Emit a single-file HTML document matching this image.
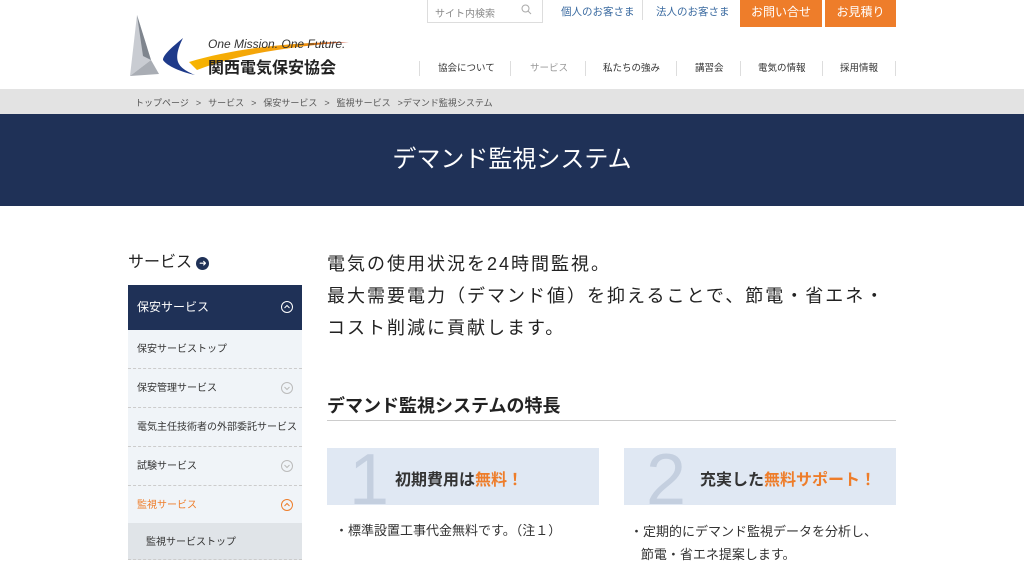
<!DOCTYPE html>
<html lang="ja"><head><meta charset="utf-8">
<style>
*{margin:0;padding:0;box-sizing:border-box}
body{width:1024px;height:560px;overflow:hidden;background:#fff;font-family:"Liberation Sans","Noto Sans CJK JP",sans-serif;color:#333;position:relative}
.a{position:absolute}
.search{left:427px;top:0;width:116px;height:23px;border:1px solid #ddd;border-top:none;font-size:10px;color:#888;padding:5px 0 0 7px}
.tl{font-size:10.5px;color:#3a6aa0;top:4px}
.btn{top:0;height:27px;background:#ee7d2a;color:#fff;font-size:12px;text-align:center;line-height:24px}
.nav{top:62px;font-size:9.5px;color:#333;height:14px;line-height:14px}
.sep{top:61px;width:1px;height:15px;background:#ddd}
.bc{left:0;top:89px;width:1024px;height:25px;background:#e3e3e3;font-size:9px;color:#555;padding:7px 0 0 135px;word-spacing:1px}
.hero{left:0;top:114px;width:1024px;height:92px;background:#1f3157;color:#fff;font-size:24px;text-align:center;line-height:92px}
.side{left:128px;width:174px;font-size:10px;color:#333;padding-left:9px;border-bottom:1px dashed #ccc;background:#f0f4f8;height:39px;line-height:39px}
.ci{position:absolute;right:9px;top:13px;width:12px;height:12px}
.lead{left:327px;top:248px;font-size:18px;line-height:32px;color:#222;letter-spacing:2px}
.card{top:448px;width:272px;height:57px;background:#e0e8f3;overflow:hidden}
.num{position:absolute;left:22px;top:-4px;font-size:72px;color:#c4cfdf;line-height:72px;font-family:"Liberation Sans",sans-serif}
.ct{position:absolute;top:18px;font-size:16px;font-weight:bold;color:#333}
.or{color:#ee7d2a}
</style></head><body>
<svg class="a" style="left:125px;top:10px" width="230" height="75" viewBox="0 0 230 75">
<defs><linearGradient id="g" x1="0" x2="1"><stop offset="0" stop-color="#f7b500"/><stop offset="0.7" stop-color="#f29a10"/><stop offset="1" stop-color="#c0301a"/></linearGradient></defs>
<path d="M12 5 L26 50 L5 66 Z" fill="#c9ccd2"/><path d="M12 5 L26 50 L18 46 Z" fill="#7f858e"/><path d="M26 50 L5 66 L34 64Z" fill="#a9adb4"/>
<path d="M58 28 C46 38 38 45 38 50 C42 56 56 62 70 65 C54 58 46 52 58 28Z" fill="#1e3a8a"/>
<path d="M64 52 C110 38 170 32 224 32 C170 36 112 44 72 60 Z" fill="url(#g)"/>
<text x="83" y="38" font-size="12" font-style="italic" fill="#333" font-family="Liberation Sans">One Mission. One Future.</text>
<text x="83" y="63" font-size="16" font-weight="bold" fill="#222" font-family="Liberation Sans,Noto Sans CJK JP">関西電気保安協会</text>
</svg>
<div class="a search">サイト内検索<svg style="position:absolute;right:10px;top:4px" width="11" height="11" viewBox="0 0 11 11"><circle cx="4.5" cy="4.5" r="3.5" fill="none" stroke="#aaa"/><path d="M7 7 L10 10" stroke="#aaa"/></svg></div>
<div class="a tl" style="left:561px">個人のお客さま</div>
<div class="a" style="left:642px;top:0;width:1px;height:20px;background:#ddd"></div>
<div class="a tl" style="left:656px">法人のお客さま</div>
<div class="a btn" style="left:740px;width:82px">お問い合せ</div>
<div class="a btn" style="left:825px;width:71px">お見積り</div>
<div class="a sep" style="left:419px"></div>
<div class="a nav" style="left:438px">協会について</div>
<div class="a sep" style="left:510px"></div>
<div class="a nav" style="left:530px;color:#999">サービス</div>
<div class="a sep" style="left:585px"></div>
<div class="a nav" style="left:603px">私たちの強み</div>
<div class="a sep" style="left:676px"></div>
<div class="a nav" style="left:695px">講習会</div>
<div class="a sep" style="left:740px"></div>
<div class="a nav" style="left:758px">電気の情報</div>
<div class="a sep" style="left:822px"></div>
<div class="a nav" style="left:840px">採用情報</div>
<div class="a sep" style="left:895px"></div>
<div class="a bc">トップページ &nbsp;&gt;&nbsp; サービス &nbsp;&gt;&nbsp; 保安サービス &nbsp;&gt;&nbsp; 監視サービス &nbsp;&gt;デマンド監視システム</div>
<div class="a hero">デマンド監視システム</div>
<div class="a" style="left:128px;top:248px;font-size:16px;color:#222">サービス <span style="display:inline-block;width:13px;height:13px;border-radius:50%;background:#1f3157;color:#fff;font-size:9px;text-align:center;line-height:13px;vertical-align:1px">➜</span></div>
<div class="a side" style="top:285px;height:45px;line-height:45px;background:#1f3157;color:#fff;font-size:12px;border:none">保安サービス<svg class="ci" style="top:16px" viewBox="0 0 12 12"><circle cx="6" cy="6" r="5.5" fill="none" stroke="#fff"/><path d="M3.5 7 L6 4.5 L8.5 7" fill="none" stroke="#fff"/></svg></div>
<div class="a side" style="top:330px">保安サービストップ</div>
<div class="a side" style="top:369px">保安管理サービス<svg class="ci" viewBox="0 0 12 12"><circle cx="6" cy="6" r="5.5" fill="none" stroke="#bbb"/><path d="M3.5 5 L6 7.5 L8.5 5" fill="none" stroke="#bbb"/></svg></div>
<div class="a side" style="top:408px">電気主任技術者の外部委託サービス</div>
<div class="a side" style="top:447px">試験サービス<svg class="ci" viewBox="0 0 12 12"><circle cx="6" cy="6" r="5.5" fill="none" stroke="#bbb"/><path d="M3.5 5 L6 7.5 L8.5 5" fill="none" stroke="#bbb"/></svg></div>
<div class="a side" style="top:486px;color:#ee7d2a">監視サービス<svg class="ci" viewBox="0 0 12 12"><circle cx="6" cy="6" r="5.5" fill="none" stroke="#ee7d2a"/><path d="M3.5 7 L6 4.5 L8.5 7" fill="none" stroke="#ee7d2a"/></svg></div>
<div class="a side" style="top:523px;background:#e0e4e8;padding-left:18px;height:37px">監視サービストップ</div>
<div class="a lead">電気の使用状況を24時間監視。<br>最大需要電力（デマンド値）を抑えることで、節電・省エネ・<br>コスト削減に貢献します。</div>
<div class="a" style="left:327px;top:392px;font-size:18px;font-weight:bold;color:#222">デマンド監視システムの特長</div>
<div class="a" style="left:327px;top:420px;width:569px;height:1px;background:#ccc"></div>
<div class="a card" style="left:327px"><span class="num">1</span><span class="ct" style="left:68px">初期費用は<span class="or">無料！</span></span></div>
<div class="a card" style="left:624px"><span class="num">2</span><span class="ct" style="left:76px">充実した<span class="or">無料サポート！</span></span></div>
<div class="a" style="left:335px;top:520px;font-size:13px;color:#333">・標準設置工事代金無料です。（注１）</div>
<div class="a" style="left:630px;top:520px;font-size:13px;color:#333;line-height:23px">・定期的にデマンド監視データを分析し、<br>&nbsp;&nbsp;&nbsp;節電・省エネ提案します。</div>
</body></html>
